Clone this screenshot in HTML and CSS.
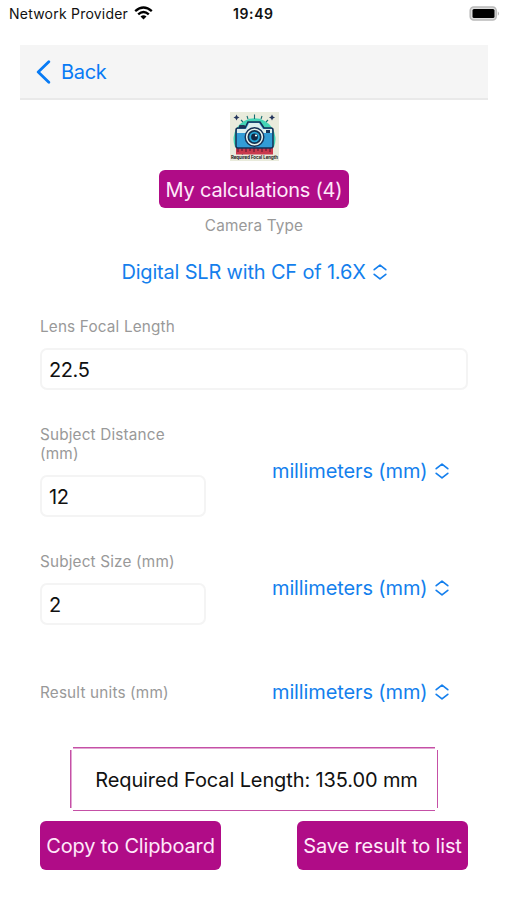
FILE: index.html
```html
<!DOCTYPE html>
<html lang="en">
<head>
<meta charset="utf-8">
<title>Required Focal Length</title>
<link rel="stylesheet" href="styles.css">
</head>
<body>
<svg class="defs" width="0" height="0" aria-hidden="true">
  <symbol id="updown" viewBox="0 0 14 16"><path d="M1.2 5.7 L7 1.2 L12.8 5.7 M1.2 10.3 L7 14.8 L12.8 10.3" fill="none" stroke="currentColor" stroke-width="1.7" stroke-linecap="round" stroke-linejoin="round"/></symbol>
</svg>
<header class="status">
  <div class="carrier"><span>Network Provider</span>
    <svg width="19" height="14" viewBox="0 0 19 14"><g fill="none" stroke="#000" stroke-width="2.4"><path d="M1.2 5.1 Q9.5 -2 17.8 5.1"/><path d="M4.2 8.3 Q9.5 3.6 14.8 8.3"/></g><path d="M6.5 10.5 Q9.5 8.1 12.5 10.5 L9.5 13.6Z"/></svg>
  </div>
  <time class="clock">19:49</time>
  <svg class="battery" width="31" height="16" viewBox="0 0 31 16"><rect x="1.2" y="1" width="26" height="13" rx="3.5" fill="#ddd" stroke="#b9b9b9" stroke-width="1.5"/><rect x="3.5" y="3" width="22" height="9" rx="1.5"/><path d="M28.8 5.2 Q31 7.5 28.8 9.8Z" fill="#aaa"/></svg>
</header>
<nav class="navbar">
  <svg width="15" height="24" viewBox="0 0 15 24"><path d="M12.8 1.8 L2.2 12 L12.8 22.2" fill="none" stroke="#087bf5" stroke-width="2.8" stroke-linecap="round" stroke-linejoin="round"/></svg>
  <a class="back">Back</a>
</nav>
<main class="content">
  <svg class="logo" width="49" height="49" viewBox="0 0 49 49">
    <rect width="49" height="49" fill="#e9ebdc"/>
    <path d="M5 35 A21 21 0 1 1 44 35Z" fill="#43d5b6"/>
    <g stroke="#176c70" stroke-width="1.1"><path d="M24.5 2.5V7M17 4L18 7M32 4L31 7M11 8L13 10M38 8L36 10"/></g>
    <path d="M6.5 2.5L7.5 4.5L9.5 5.5L7.5 6.5L6.5 8.5L5.5 6.5L3.5 5.5L5.5 4.5ZM42 2.5L43 4.5L45 5.5L43 6.5L42 8.5L41 6.5L39 5.5L41 4.5Z" fill="#24355c"/>
    <rect x="6" y="36" width="37" height="6.5" fill="#c9394c"/>
    <path d="M8 36V40M12 36V39M16 36V40M20 36V39M24 36V40M28 36V39M32 36V40M36 36V39M40 36V40" stroke="#54162d"/>
    <rect x="9" y="13" width="6" height="4" rx="1" fill="#203657"/>
    <path d="M8 16H15L18 10H30L34 16H41Q43 16 43 18V34Q43 36 41 36H8Q6 36 6 34V18Q6 16 8 16Z" fill="#329cd6" stroke="#142f54" stroke-width="1.5"/>
    <path d="M7 17H16L19 11H29L33 17H42V21H7Z" fill="#dceeed"/>
    <rect x="36" y="18" width="4" height="3" fill="#17365c"/>
    <circle cx="24.5" cy="25" r="9.3" fill="#eaf4ed" stroke="#142f54" stroke-width="1.4"/>
    <circle cx="24.5" cy="25" r="6.2" fill="#26a5d6" stroke="#12304f" stroke-width="1.7"/>
    <circle cx="24.5" cy="25" r="3.4" fill="#102744"/><circle cx="26" cy="23.5" r="1.1" fill="#fff"/>
    <text x="1" y="47" textLength="47" lengthAdjust="spacingAndGlyphs">Required Focal Length</text>
  </svg>
  <button class="btn calculations">My calculations (4)</button>
  <div class="label camera-label">Camera Type</div>
  <div class="picker camera"><span>Digital SLR with CF of 1.6X</span><svg><use href="#updown"/></svg></div>
  <section class="field lens">
    <label class="label">Lens Focal Length</label>
    <div class="input">22.5</div>
  </section>
  <section class="row distance">
    <div class="field"><label class="label">Subject Distance<br>(mm)</label><div class="input">12</div></div>
    <div class="picker"><span>millimeters (mm)</span><svg><use href="#updown"/></svg></div>
  </section>
  <section class="row size">
    <div class="field"><label class="label">Subject Size (mm)</label><div class="input">2</div></div>
    <div class="picker"><span>millimeters (mm)</span><svg><use href="#updown"/></svg></div>
  </section>
  <section class="row units">
    <div class="label">Result units (mm)</div>
    <div class="picker"><span>millimeters (mm)</span><svg><use href="#updown"/></svg></div>
  </section>
  <output class="result">Required Focal Length: 135.00 mm</output>
  <div class="actions">
    <button class="btn copy">Copy to Clipboard</button>
    <button class="btn save">Save result to list</button>
  </div>
</main>
</body>
</html>
```
FILE: styles.css
```css
* { box-sizing: border-box; }
body { margin: 0; width: 507px; height: 900px; overflow: hidden; background: #fff; color: #111; font-family: Inter, sans-serif; font-size: 20px; letter-spacing: -.12px; }
.defs { display: block; height: 0; }
.status { height: 28px; padding: 0 7px 2px 9px; display: grid; grid-template-columns: 200px 1fr 31px; align-items: center; }
.carrier { display: flex; align-items: center; gap: 6px; font-size: 14px; letter-spacing: .22px; white-space: nowrap; }
.carrier svg { margin-top: -1px; }
.clock { padding-left: 24px; font-size: 14px; font-weight: 600; letter-spacing: .6px; }
.battery { margin-top: 1px; }
.navbar { width: 468px; height: 55px; margin: 17px 0 0 20px; padding: 1px 0 0 16px; display: flex; align-items: center; gap: 10px; background: #f5f5f5; border-bottom: 2px solid #e9e9e9; }
.back { color: #087bf5; letter-spacing: -.3px; }
.content { padding: 12px 39px 0 40px; display: flex; flex-direction: column; }
.logo { display: block; align-self: center; margin-bottom: 9px; overflow: visible; }
.logo text { font: 700 4.6px Inter, sans-serif; letter-spacing: 0; fill: #111; }
.btn { height: 49px; padding: 1px 0 0; border: 0; border-radius: 6px; background: #b00c87; color: #ffe9fa; font: 20px Inter, sans-serif; letter-spacing: -.14px; white-space: nowrap; }
.calculations { width: 190px; height: 38px; align-self: center; letter-spacing: -.22px; }
.label { display: block; color: #999; font-size: 15.3px; line-height: 19px; letter-spacing: .17px; }
.camera-label { align-self: center; margin-top: 8px; }
.picker { display: flex; align-items: center; gap: 7px; height: 26px; color: #147fed; white-space: nowrap; }
.picker svg { width: 14px; height: 16px; flex: none; }
.camera { align-self: center; margin-top: 24px; letter-spacing: -.18px; }
.lens { margin-top: 32px; }
.input { height: 42px; margin-top: 12px; padding: 1px 0 0 7px; display: flex; align-items: center; border: 2px solid #f4f4f4; border-radius: 7px; letter-spacing: -.4px; }
.row { display: grid; grid-template-columns: 166px 1fr; column-gap: 66px; align-items: center; }
.distance { margin-top: 35px; }
.distance .picker { margin-top: -1px; }
.size { margin-top: 35px; }
.size .picker { margin-top: -1px; }
.units { margin-top: 54px; }
.result { width: 368px; height: 64px; margin: 42px 0 10px; align-self: center; display: flex; align-items: center; justify-content: center; padding: 1px 0 0 5px; white-space: nowrap;
  background: linear-gradient(#c550a6,#c550a6) center top / calc(100% - 6px) 1.5px no-repeat, linear-gradient(#c550a6,#c550a6) center bottom / calc(100% - 6px) 1.5px no-repeat, linear-gradient(#c550a6,#c550a6) left center / 1.5px calc(100% - 6px) no-repeat, linear-gradient(#c550a6,#c550a6) right center / 1.5px calc(100% - 6px) no-repeat; }
.actions { display: flex; justify-content: space-between; }
.copy { width: 181px; }
.save { width: 171px; }
```
